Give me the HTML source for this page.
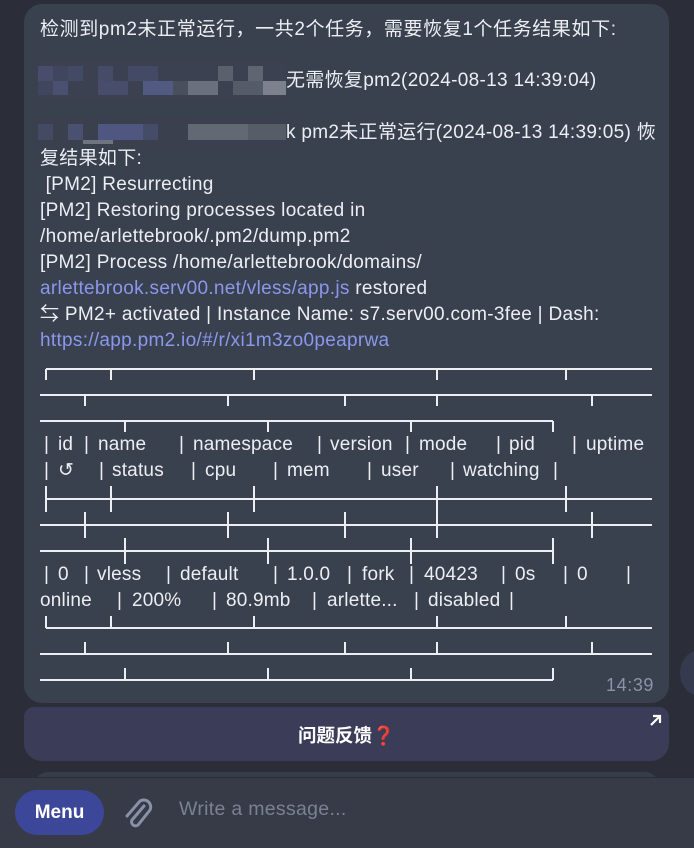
<!DOCTYPE html>
<html><head><meta charset="utf-8"><style>
html,body{margin:0;padding:0;}
body{width:694px;height:847px;background:#2b2e38;position:relative;overflow:hidden;font-family:"Liberation Sans","Noto Sans CJK SC",sans-serif;color:#eceef2;}
.bubble{position:absolute;left:24px;top:4px;width:645px;height:699px;background:#39414f;border-radius:18px;}
.t{position:absolute;left:40px;font-size:19px;letter-spacing:0.3px;line-height:26px;white-space:nowrap;}
.a{color:#8b97ea;}
.s{position:absolute;font-size:19px;letter-spacing:0.2px;line-height:26px;white-space:nowrap;}
.pix{position:absolute;}
</style></head><body>
<div style="position:absolute;left:680px;top:650px;width:40px;height:46px;border-radius:50%;background:#363a4e"></div>
<div class="bubble"></div>
<div class="t" style="top:17px;letter-spacing:0.6px">检测到pm2未正常运行，一共2个任务，需要恢复1个任务结果如下:</div>
<svg class="pix" style="left:38px;top:62px" width="248" height="36">
<rect width="248" height="36" fill="#3b4150"/>
<rect x="0" y="4" width="15" height="15" fill="#474d6a"/><rect x="15" y="4" width="15" height="15" fill="#40465e"/><rect x="30" y="4" width="15" height="15" fill="#434a66"/><rect x="60" y="4" width="15" height="15" fill="#454c68"/><rect x="90" y="4" width="30" height="15" fill="#434a66"/><rect x="180" y="4" width="15" height="15" fill="#5a616e"/><rect x="210" y="4" width="15" height="15" fill="#5f6572"/>
<rect x="0" y="19" width="15" height="14" fill="#40465e"/><rect x="15" y="19" width="15" height="14" fill="#4a5070"/><rect x="60" y="19" width="30" height="14" fill="#474d6a"/><rect x="105" y="19" width="30" height="14" fill="#525a82"/><rect x="135" y="19" width="15" height="14" fill="#4a4f5c"/><rect x="150" y="19" width="30" height="14" fill="#6a707c"/><rect x="195" y="19" width="30" height="14" fill="#555b67"/><rect x="225" y="19" width="23" height="14" fill="#7c818c"/>
</svg>
<div class="t" style="top:68px;left:286px">无需恢复pm2(2024-08-13 14:39:04)</div>
<svg class="pix" style="left:38px;top:116px" width="248" height="30">
<rect width="248" height="30" fill="#3a404e"/>
<rect x="0" y="8" width="15" height="16" fill="#434a62"/><rect x="30" y="8" width="15" height="16" fill="#4a5070"/><rect x="60" y="8" width="45" height="16" fill="#4f5680"/><rect x="105" y="8" width="15" height="16" fill="#454c68"/><rect x="150" y="8" width="60" height="16" fill="#626874"/><rect x="210" y="8" width="38" height="16" fill="#565c68"/><rect x="45" y="24" width="30" height="4" fill="#6e7480"/>
</svg>
<div class="t" style="top:120px;left:286px">k pm2未正常运行(2024-08-13 14:39:05) 恢</div>
<div class="t" style="top:146px">复结果如下:</div>
<div class="t" style="top:172px">&nbsp;[PM2] Resurrecting</div>
<div class="t" style="top:198px">[PM2] Restoring processes located in</div>
<div class="t" style="top:224px">/home/arlettebrook/.pm2/dump.pm2</div>
<div class="t" style="top:250px">[PM2] Process /home/arlettebrook/domains/</div>
<div class="t" style="top:276px"><span class="a">arlettebrook.serv00.net/vless/app.js</span> restored</div>
<div class="t" style="top:302px">⇆ PM2+ activated | Instance Name: s7.serv00.com-3fee | Dash:</div>
<div class="t a" style="top:328px">https://app.pm2.io/#/r/xi1m3zo0peaprwa</div>

<svg style="position:absolute;left:0;top:0" width="694" height="847" stroke="#eceef2" stroke-width="2" fill="none">
<path d="M46 369H652M40 395H652M40 421H553"/>
<path d="M46 369V380M111 369V380M254 369V380M437 369V380M566 369V380"/>
<path d="M85 395V406M228 395V406M345 395V406M437 395V406M592 395V406"/>
<path d="M125 421V432M268 421V432M411 421V432M553 421V432"/>
<path d="M46 499H652M40 525H652M40 551H553"/>
<path d="M46 486V512M111 486V512M254 486V512M437 486V512M566 486V512"/>
<path d="M85 512V538M228 512V538M345 512V538M437 512V538M592 512V538"/>
<path d="M125 538V564M268 538V564M411 538V564M553 538V564"/>
<path d="M46 628H652M40 654H652M40 680H553"/>
<path d="M46 616V628M111 616V628M254 616V628M437 616V628M566 616V628"/>
<path d="M85 642V654M228 642V654M345 642V654M437 642V654M592 642V654"/>
<path d="M125 668V680M268 668V680M411 668V680M553 668V680"/>
</svg>

<div style="position:absolute;top:432px;left:0">
<span class="s" style="left:44px">|</span><span class="s" style="left:58px">id</span><span class="s" style="left:84px">|</span><span class="s" style="left:98px">name</span><span class="s" style="left:179px">|</span><span class="s" style="left:193px">namespace</span><span class="s" style="left:317px">|</span><span class="s" style="left:330px">version</span><span class="s" style="left:405px">|</span><span class="s" style="left:419px">mode</span><span class="s" style="left:496px">|</span><span class="s" style="left:509px">pid</span><span class="s" style="left:572px">|</span><span class="s" style="left:586px">uptime</span>
</div>
<div style="position:absolute;top:458px;left:0">
<span class="s" style="left:44px">|</span><span class="s" style="left:58px">↺</span><span class="s" style="left:99px">|</span><span class="s" style="left:112px">status</span><span class="s" style="left:191px">|</span><span class="s" style="left:205px">cpu</span><span class="s" style="left:273px">|</span><span class="s" style="left:287px">mem</span><span class="s" style="left:367px">|</span><span class="s" style="left:381px">user</span><span class="s" style="left:450px">|</span><span class="s" style="left:463px">watching</span><span class="s" style="left:553px">|</span>
</div>
<div style="position:absolute;top:562px;left:0">
<span class="s" style="left:44px">|</span><span class="s" style="left:58px">0</span><span class="s" style="left:84px">|</span><span class="s" style="left:97px">vless</span><span class="s" style="left:166px">|</span><span class="s" style="left:180px">default</span><span class="s" style="left:273px">|</span><span class="s" style="left:287px">1.0.0</span><span class="s" style="left:347px">|</span><span class="s" style="left:362px">fork</span><span class="s" style="left:409px">|</span><span class="s" style="left:424px">40423</span><span class="s" style="left:501px">|</span><span class="s" style="left:515px">0s</span><span class="s" style="left:563px">|</span><span class="s" style="left:577px">0</span><span class="s" style="left:626px">|</span>
</div>
<div style="position:absolute;top:588px;left:0">
<span class="s" style="left:40px">online</span><span class="s" style="left:117px">|</span><span class="s" style="left:132px">200%</span><span class="s" style="left:212px">|</span><span class="s" style="left:226px">80.9mb</span><span class="s" style="left:312px">|</span><span class="s" style="left:327px">arlette...</span><span class="s" style="left:414px">|</span><span class="s" style="left:428px">disabled</span><span class="s" style="left:509px">|</span>
</div>
<div style="position:absolute;left:606px;top:675px;font-size:18px;letter-spacing:0.6px;color:#8a93a8">14:39</div>

<div style="position:absolute;left:24px;top:707px;width:645px;height:54px;background:#3b3d58;border-radius:10px 10px 18px 18px;"></div>
<div style="position:absolute;left:24px;top:722px;width:645px;text-align:center;font-size:18.5px;font-weight:bold;color:#fff">问题反馈<span style="color:#e01b24">❓</span></div>
<svg style="position:absolute;left:649px;top:713px" width="14" height="14" stroke="#fff" stroke-width="2.2" fill="none"><path d="M2 12L11 3M4 3H11V10"/></svg>

<div style="position:absolute;left:34px;top:772px;width:625px;height:30px;background:#363d4a;border-radius:14px"></div>
<div style="position:absolute;left:0;top:777px;width:694px;height:70px;background:#363b47;border-top:1px solid #2a2d36"></div>
<div style="position:absolute;left:15px;top:790px;width:89px;height:45px;background:#3c479a;border-radius:23px;color:#fff;font-size:19px;font-weight:bold;text-align:center;line-height:45px">Menu</div>
<svg style="position:absolute;left:120px;top:794px" width="36" height="38" viewBox="0 0 36 38" fill="none" stroke="#8c8fa8" stroke-width="3" stroke-linecap="round"><path d="M24 12L12 26a4 4 0 0 0 6 5L30 16a7 7 0 0 0-10-9L7 22"/></svg>
<div style="position:absolute;left:179px;top:798px;font-size:19.5px;letter-spacing:0.3px;color:#7c8191">Write a message...</div>
</body></html>
